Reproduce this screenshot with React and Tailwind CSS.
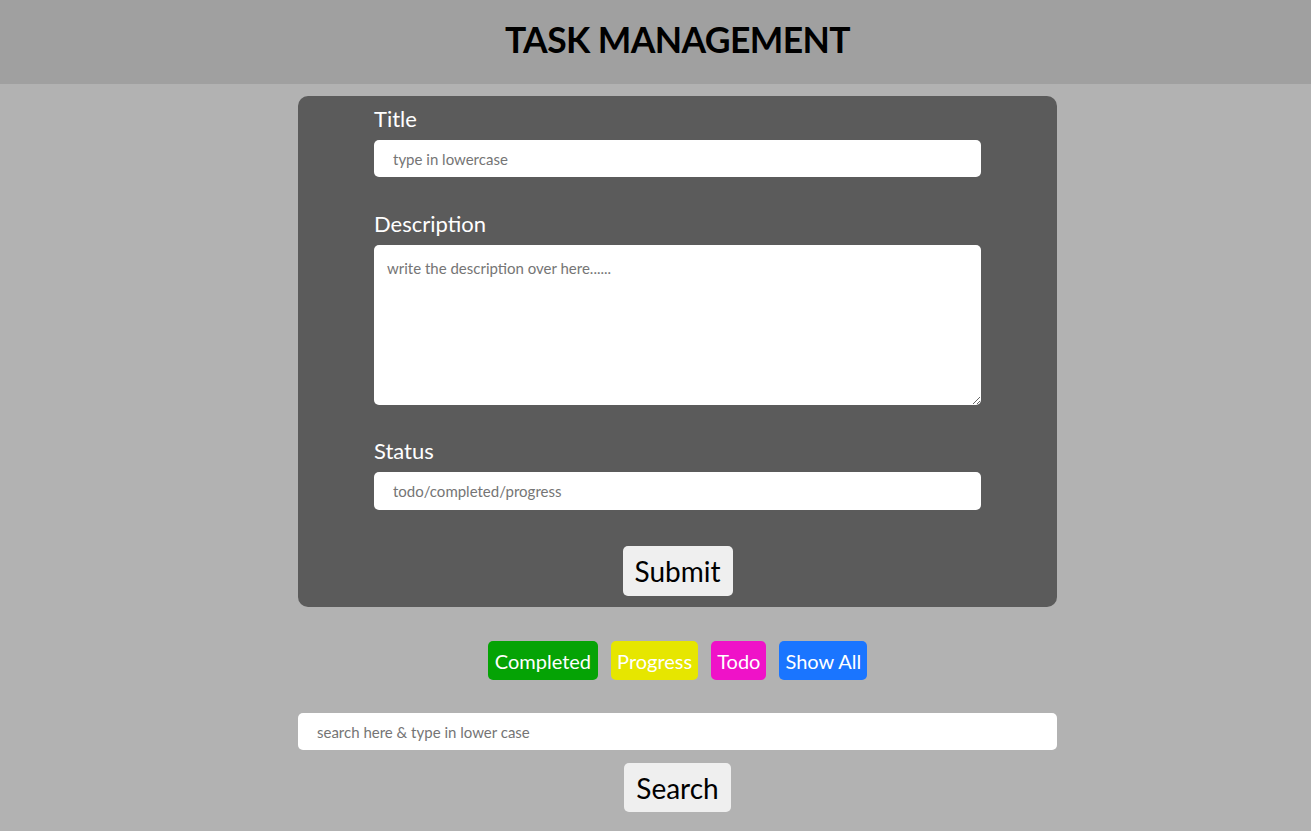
export default function App() {
  const font = { fontFamily: "Lato, 'Open Sans', sans-serif" };

  return (
    <div className="min-h-screen bg-[#b2b2b2]" style={font}>
      <header className="h-[84px] bg-[#a0a0a0] flex items-center justify-center pl-[44px] pb-[4px]">
        <h1 className="text-[35.5px] font-bold text-black tracking-[-0.6px]">TASK MANAGEMENT</h1>
      </header>

      <div className="flex flex-col items-center pl-[44px]">
        {/* form card */}
        <form className="mt-3 w-[759px] bg-[#5b5b5b] rounded-[10px] px-[76px] pt-[9px] pb-[11px] flex flex-col">
          <label className="text-white text-[22px] leading-[27px]">Title</label>
          <input
            className="mt-2 h-[37px] w-full bg-white rounded-[5px] px-[19px] text-[15px] placeholder:text-[#757575] outline-none"
            placeholder="type in lowercase"
          />

          <label className="mt-[33px] text-white text-[22px] leading-[27px]">Description</label>
          <textarea
            className="mt-2 h-[160px] w-full bg-white rounded-[5px] px-[13px] py-[12px] text-[15px] placeholder:text-[#757575] outline-none"
            placeholder="write the description over here......"
          />

          <label className="mt-[32px] text-white text-[22px] leading-[27px]">Status</label>
          <input
            className="mt-2 h-[38px] w-full bg-white rounded-[5px] px-[19px] text-[15px] placeholder:text-[#757575] outline-none"
            placeholder="todo/completed/progress"
          />

          <div className="mt-[36px] flex justify-center">
            <button type="button" className="h-[50px] px-[12px] bg-[#efefef] rounded-[5px] text-[28px] text-black">
              Submit
            </button>
          </div>
        </form>

        {/* filters */}
        <div className="mt-[34px] flex gap-[13px]">
          <button className="h-[39px] px-[7px] rounded-[5px] bg-[#05a305] text-white text-[20px]">Completed</button>
          <button className="h-[39px] px-[6px] rounded-[5px] bg-[#e6e600] text-white text-[20px]">Progress</button>
          <button className="h-[39px] px-[6px] rounded-[5px] bg-[#ef12c8] text-white text-[20px]">Todo</button>
          <button className="h-[39px] px-[6px] rounded-[5px] bg-[#1a75ff] text-white text-[20px]">Show All</button>
        </div>

        {/* search */}
        <input
          className="mt-[33px] h-[37px] w-[759px] bg-white rounded-[5px] px-[19px] text-[15px] placeholder:text-[#757575] outline-none"
          placeholder="search here & type in lower case"
        />
        <button className="mt-[13px] h-[49px] px-[12px] bg-[#efefef] rounded-[5px] text-[28px] text-black">
          Search
        </button>
      </div>
    </div>
  );
}
